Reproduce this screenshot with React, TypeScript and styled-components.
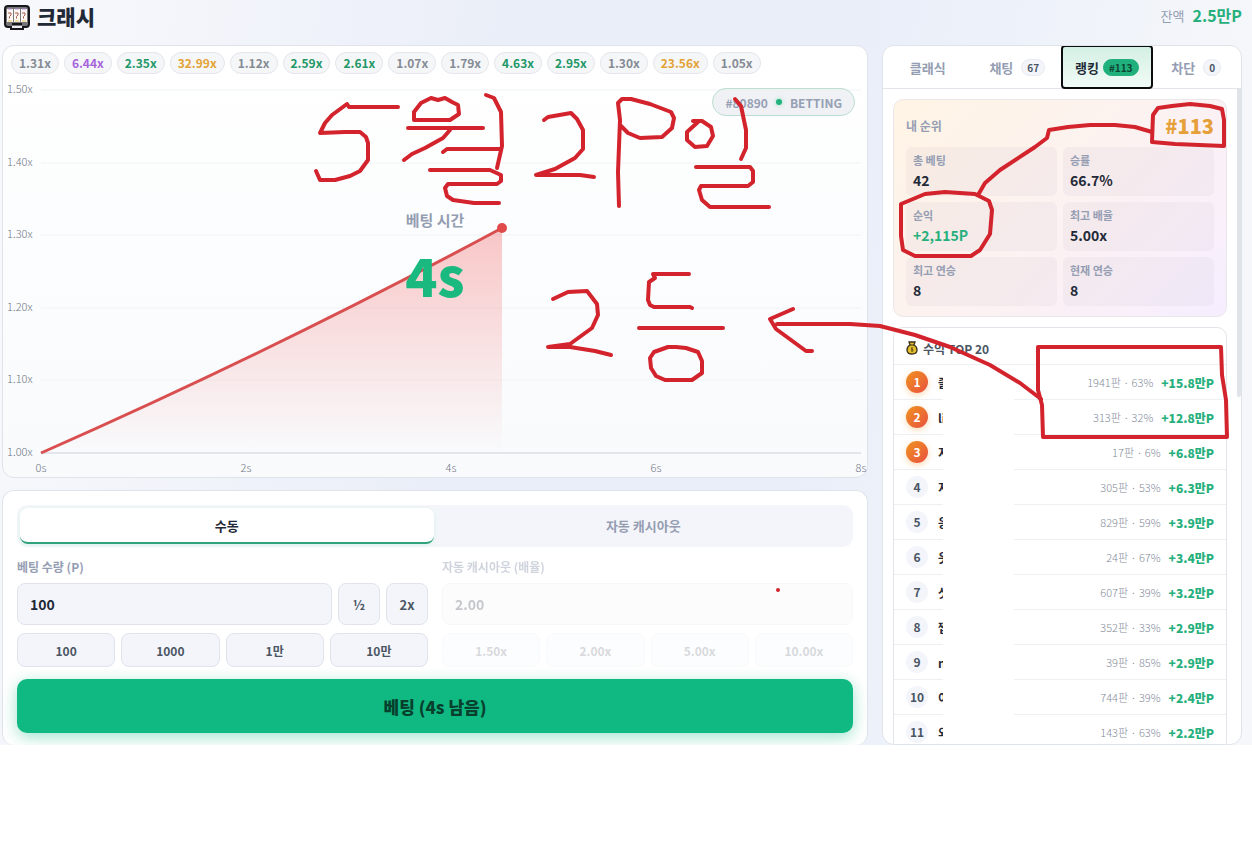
import React, { useState } from "react";
import styled, { createGlobalStyle } from "styled-components";

const Global = createGlobalStyle`
  *, *::before, *::after { box-sizing: border-box; }
  body { margin: 0; background: #fff; }
  body, button, input { font-family: "Noto Sans CJK KR", "Noto Sans", sans-serif; }
  button { margin: 0; padding: 0; border: 0; background: none; color: inherit; cursor: pointer; }
`;

type Tier = "low" | "mid" | "high" | "max";
const tierColor: Record<Tier, string> = { low: "#858b94", mid: "#1f9868", high: "#a765dc", max: "#e3a336" };

const Page = styled.main`
  position: relative;
  overflow: hidden;
  padding: 0 10px 0 2px;
  color: #1f2937;
  background: linear-gradient(100deg, #f8f9fc 0%, #eaeef8 38%, #e9eef9 62%, #f5f7fa 92%);
`;
const TopBar = styled.header`
  display: flex;
  align-items: flex-start;
  justify-content: space-between;
  height: 33px;
  margin-bottom: 12px;
`;
const Title = styled.h1`
  display: flex;
  align-items: flex-start;
  gap: 7px;
  margin: 0;
  padding-left: 2px;
  font-size: 21px;
  line-height: 32px;
  font-weight: 900;
  svg { margin-top: 4px; }
`;
const Balance = styled.div`
  display: flex;
  align-items: center;
  gap: 8px;
  font-size: 13px;
  line-height: 31px;
  color: #949db2;
`;
const BalanceValue = styled.strong`
  font-size: 16px;
  color: #27b07d;
`;
const Columns = styled.div`
  display: grid;
  grid-template-columns: minmax(0, 1fr) 360px;
  gap: 14px;
`;
const LeftColumn = styled.div`
  display: flex;
  flex-direction: column;
  gap: 12px;
`;
const Panel = styled.section`
  border: 1px solid #dfe3ea;
  border-radius: 12px;
  background: #fff;
`;
const ChartPanel = styled(Panel)`
  position: relative;
  background: linear-gradient(180deg, #fff, #f8fafc);
`;
const ChipRow = styled.div`
  display: flex;
  gap: 5px;
  padding: 6px 8px;
`;
const Chip = styled.span<{ $tier: Tier }>`
  padding: 0 7px;
  border: 1px solid #e4e6eb;
  border-radius: 11px;
  background: #f5f6f8;
  font-size: 12px;
  line-height: 20px;
  font-weight: 700;
  color: ${(p) => tierColor[p.$tier]};
`;
const ChartSvg = styled.svg`
  display: block;
  width: 100%;
  height: auto;
  overflow: visible;
  font-family: "Noto Sans CJK KR", sans-serif;
  font-size: 11px;
  font-weight: 300;
`;
const RoundBadge = styled.div`
  position: absolute;
  top: 42px;
  right: 12px;
  display: flex;
  align-items: center;
  gap: 8px;
  height: 28px;
  padding: 0 12px;
  border: 1px solid #bcded0;
  border-radius: 14px;
  background: #eff1f4;
  font-size: 12px;
  font-weight: 700;
  color: #96a0b4;
`;
const LiveDot = styled.i`
  width: 6px;
  height: 6px;
  border-radius: 50%;
  background: #22b07d;
  box-shadow: 0 0 4px #8fdcc0;
`;
const Countdown = styled.div`
  position: absolute;
  top: 163px;
  left: 0;
  right: 0;
  text-align: center;
  pointer-events: none;
`;
const CountdownLabel = styled.div`
  font-size: 15px;
  line-height: 22px;
  font-weight: 700;
  color: #949db2;
`;
const CountdownValue = styled.div`
  margin-top: 12px;
  font-size: 53px;
  line-height: 62px;
  font-weight: 900;
  color: #1ab980;
`;

const BetPanel = styled(Panel)`
  display: flex;
  flex-direction: column;
  gap: 12px;
  padding: 14px 14px 12px;
  border-bottom: 0;
`;
const Segmented = styled.div`
  display: grid;
  grid-template-columns: 1fr 1fr;
  gap: 3px;
  height: 42px;
  padding: 3px;
  border-radius: 10px;
  background: #f4f5fa;
`;
const Segment = styled.button<{ $active: boolean }>`
  border-radius: 8px;
  border-bottom: 2px solid ${(p) => (p.$active ? "#2fa37a" : "transparent")};
  background: ${(p) => (p.$active ? "#fff" : "transparent")};
  box-shadow: ${(p) => (p.$active ? "0 1px 4px #d8f3ea" : "none")};
  font-size: 13px;
  font-weight: 700;
  color: ${(p) => (p.$active ? "#1f2937" : "#949db2")};
`;
const Fields = styled.div`
  display: grid;
  grid-template-columns: 1fr 1fr;
  gap: 14px;
`;
const Field = styled.div<{ $disabled?: boolean }>`
  display: flex;
  flex-direction: column;
  gap: 8px;
  min-width: 0;
  opacity: ${(p) => (p.$disabled ? 0.45 : 1)};
`;
const FieldLabel = styled.label`
  font-size: 12px;
  line-height: 16px;
  font-weight: 700;
  color: #949db2;
`;
const FieldRow = styled.div`
  display: flex;
  gap: 6px;
`;
const TextInput = styled.input`
  flex: 1;
  min-width: 0;
  height: 42px;
  padding: 0 12px;
  border: 1px solid #e1e3ec;
  border-radius: 8px;
  background: #f4f5fb;
  font-size: 14px;
  font-weight: 700;
  color: #1f2937;
  &:disabled { border-color: #eceef2; background: #f9f9fb; color: #7d828b; }
`;
const SmallButton = styled.button`
  width: 42px;
  height: 42px;
  border: 1px solid #e1e3ec;
  border-radius: 8px;
  background: #f4f5fb;
  font-size: 13px;
  font-weight: 700;
  color: #4b5563;
`;
const QuickButton = styled(SmallButton)<{ $faded?: boolean }>`
  flex: 1;
  width: auto;
  height: 34px;
  font-size: 12px;
  opacity: ${(p) => (p.$faded ? 0.5 : 1)};
`;
const BetButton = styled.button`
  height: 54px;
  border-radius: 10px;
  background: #10b981;
  box-shadow: 0 4px 16px rgba(16, 185, 129, 0.4);
  font-size: 17px;
  font-weight: 900;
  color: #08402e;
`;

const SidePanel = styled(Panel)`
  contain: size;
  display: flex;
  flex-direction: column;
  overflow: hidden;
`;
const Tabs = styled.nav`
  display: grid;
  grid-template-columns: repeat(4, 1fr);
  flex: none;
  height: 43px;
  border-bottom: 1px solid #e1e5ea;
`;
const Tab = styled.button<{ $active: boolean }>`
  display: flex;
  align-items: center;
  justify-content: center;
  gap: ${(p) => (p.$active ? 4 : 8)}px;
  border-radius: 3px;
  outline: ${(p) => (p.$active ? "2px solid #0b0d10" : "none")};
  outline-offset: -1px;
  background: ${(p) => (p.$active ? "linear-gradient(180deg, #d3efe2, #f2fcf8)" : "none")};
  font-size: 13px;
  font-weight: 700;
  color: ${(p) => (p.$active ? "#1f2937" : "#949db2")};
`;
const TabCount = styled.span<{ $active: boolean }>`
  padding: 0 5px;
  border: 1px solid ${(p) => (p.$active ? "#1fb07c" : "#e8eaf1")};
  border-radius: 9px;
  background: ${(p) => (p.$active ? "#1fb07c" : "#f4f5fb")};
  font-size: 10px;
  line-height: 15px;
  color: ${(p) => (p.$active ? "#0d4632" : "#4b5563")};
`;
const ScrollArea = styled.div`
  display: flex;
  flex: 1;
  min-height: 0;
`;
const ScrollContent = styled.div`
  flex: 1;
  min-width: 0;
  padding: 10px 10px 0;
`;
const ScrollTrack = styled.div`
  flex: none;
  width: 4px;
`;
const ScrollThumb = styled.div`
  height: 308px;
  border-radius: 0 0 2px 2px;
  background: #e0e4e8;
`;
const RankCard = styled.div`
  padding: 12px 12px 10px;
  border: 1px solid #ebe6e9;
  border-radius: 10px;
  background: linear-gradient(135deg, #fff4e4 0%, #fcf2f1 50%, #f6eeff 100%);
`;
const RankHead = styled.div`
  display: flex;
  align-items: center;
  justify-content: space-between;
  height: 28px;
  margin-bottom: 7px;
  font-size: 12px;
  line-height: 32px;
  font-weight: 700;
  color: #949db2;
`;
const RankNumber = styled.strong`
  font-size: 20px;
  line-height: 28px;
  font-weight: 900;
  color: #e6a03a;
`;
const StatGrid = styled.dl`
  display: grid;
  grid-template-columns: 1fr 1fr;
  gap: 6px;
  margin: 0;
`;
const Stat = styled.div`
  padding: 4px 7px;
  border-radius: 6px;
  background: rgba(150, 145, 165, 0.07);
`;
const StatLabel = styled.dt`
  font-size: 11px;
  line-height: 18px;
  font-weight: 700;
  color: #949db2;
`;
const StatValue = styled.dd<{ $gain?: boolean }>`
  margin: 0;
  font-size: 14px;
  line-height: 23px;
  font-weight: 700;
  color: ${(p) => (p.$gain ? "#27b07d" : "#1f2937")};
`;
const TopCard = styled.div`
  margin-top: 10px;
  border: 1px solid #e1e5ea;
  border-radius: 10px 10px 0 0;
`;
const TopHead = styled.h2`
  display: flex;
  align-items: center;
  gap: 5px;
  height: 37px;
  margin: 0;
  padding: 4px 12px 0;
  border-bottom: 1px solid #edf0f3;
  font-size: 12px;
  font-weight: 700;
  color: #4b5563;
`;
const TopRows = styled.ol`
  position: relative;
  margin: 0;
  padding: 0;
  list-style: none;
`;
const TopRow = styled.li`
  display: flex;
  align-items: center;
  gap: 8px;
  height: 35px;
  padding: 0 12px;
  border-bottom: 1px solid #edf0f3;
`;
const Medal = styled.span<{ $top: boolean }>`
  width: 22px;
  height: 22px;
  margin-right: 2px;
  border-radius: 50%;
  text-align: center;
  font-size: 12px;
  line-height: 22px;
  font-weight: 700;
  color: ${(p) => (p.$top ? "#fff" : "#4b5563")};
  background: ${(p) => (p.$top ? "linear-gradient(135deg, #f0941f, #e9503f)" : "#f4f5fb")};
  box-shadow: ${(p) => (p.$top ? "0 2px 6px rgba(240, 150, 40, 0.35)" : "none")};
`;
const Player = styled.span`
  flex: 1;
  min-width: 0;
  overflow: hidden;
  white-space: nowrap;
  font-size: 12px;
  font-weight: 700;
`;
const Record = styled.span`
  font-size: 11px;
  font-weight: 300;
  color: #848b9a;
`;
const Profit = styled.strong`
  font-size: 12px;
  font-weight: 900;
  color: #27b07d;
`;
const NameMask = styled.li`
  position: absolute;
  top: 1px;
  bottom: 0;
  left: 49px;
  width: 71px;
  background: #fff;
`;
const Ink = styled.svg`
  position: absolute;
  top: 0;
  left: 0;
  pointer-events: none;
  fill: none;
  stroke: #d3242d;
  stroke-width: 4;
  stroke-linecap: round;
  stroke-linejoin: round;
`;

const chips: [string, Tier][] = [
  ["1.31x", "low"], ["6.44x", "high"], ["2.35x", "mid"], ["32.99x", "max"], ["1.12x", "low"],
  ["2.59x", "mid"], ["2.61x", "mid"], ["1.07x", "low"], ["1.79x", "low"], ["4.63x", "mid"],
  ["2.95x", "mid"], ["1.30x", "low"], ["23.56x", "max"], ["1.05x", "low"],
];
const tabs: [string, string?][] = [["클래식"], ["채팅", "67"], ["랭킹", "#113"], ["차단", "0"]];
const stats: [string, string][] = [
  ["총 베팅", "42"], ["승률", "66.7%"], ["순익", "+2,115P"],
  ["최고 배율", "5.00x"], ["최고 연승", "8"], ["현재 연승", "8"],
];
const leaders: [string, string, string][] = [
  ["졸", "1941판 · 63%", "+15.8만P"], ["li", "313판 · 32%", "+12.8만P"], ["지", "17판 · 6%", "+6.8만P"],
  ["지", "305판 · 53%", "+6.3만P"], ["응", "829판 · 59%", "+3.9만P"], ["옷", "24판 · 67%", "+3.4만P"],
  ["삿", "607판 · 39%", "+3.2만P"], ["찝", "352판 · 33%", "+2.9만P"], ["n", "39판 · 85%", "+2.9만P"],
  ["이", "744판 · 39%", "+2.4만P"], ["외", "143판 · 63%", "+2.2만P"],
];
const strokes = [
  "M398 107H349L347 104L332 115L325 123L320 133L345 132L360 132L366 137L368 143V160L360 171L350 176L335 180H320L316 171",
  "M414 120V112L421 103L431 98L438 100L445 98L452 102L458 105L459 114L450 120Z",
  "M408 128H483M450 130L443 138L425 148L412 154L404 160",
  "M486 95L494 98L501 112L502 146L497 168M443 152L447 149H500",
  "M430 170H490L501 175V181L497 184H448L445 188L447 196L453 200L474 203H499",
  "M544 120L548 117L571 113L577 119L583 130V149L575 158L555 169L536 175H580L594 177",
  "M619 206L618 172L620 120L618 103L622 99H631L650 104L671 112L674 118L672 128L662 137L640 138L628 133L620 125",
  "M693 121H702L711 127L713 136L707 146L695 147L687 140V132L698 122",
  "M735 99L741 106L746 130V148L741 159",
  "M696 167H750L753 171V182L748 186H701L699 190L702 200L710 207H769",
  "M553 299L568 292L587 291L597 304L598 315L592 328L570 344L548 347H570L595 351L611 355",
  "M689 274H653L655 278L649 282L648 300L650 305L654 307H690L692 308",
  "M639 328H723M668 347L654 352L650 358L651 368L656 376L665 380H692L702 373V361L698 352L686 348L676 347Z",
  "M793 309L770 319L776 329L806 351H812M777 324H850L880 326L915 335L950 347L990 365L1020 383L1041 399",
  "M1153 115L1158 108L1172 106L1190 104L1210 106L1222 109L1224 120V146L1175 144L1152 142L1153 115",
  "M1152 132L1135 127L1115 125H1090L1068 127L1049 130L1047 138L1035 147L1000 170L985 183L978 195",
  "M901 204L925 194L945 192L975 194L989 201L992 210L990 234L980 250L971 256H915L903 250L901 236Z",
  "M1038 347V390L1042 405L1043 437H1227L1226 400L1222 375L1221 347Z",
];

const SlotIcon = () => (
  <svg width="26" height="26" viewBox="0 0 26 26" aria-hidden="true">
    <rect x="1" y="2" width="24" height="21" rx="3" fill="#77777b" stroke="#18181b" strokeWidth="2" />
    <path d="M6 23h14v3H6z" fill="#18181b" />
    <path d="M8 22h10v2H8z" fill="#eee" />
    <path d="M3 5h6v13H3zM10 5h6v13h-6zM17 5h6v13h-6z" fill="#fff8f2" />
    <path d="M4 5h4M11 5h4M18 5h4" stroke="#b58cd6" />
    <path d="M4 17h4M11 17h4M18 17h4" stroke="#e4c95c" />
    <path d="M4 9h3v2l-1.500 1.500v2M11 9h3v2l-1.500 1.500v2M18 9h3v2l-1.500 1.500v2" fill="none" stroke="#a65b4e" />
    <path d="M8 20h10" stroke="#18181b" strokeWidth="2" />
  </svg>
);

const BagIcon = () => (
  <svg width="12" height="14" viewBox="0 0 12 14" aria-hidden="true">
    <path d="M3 1h6L8 4c2 1 3 3 3 5 0 3-2 4-5 4S1 12 1 9c0-2 1-4 3-5z" fill="#e3bd2c" stroke="#38301c" strokeWidth="1.3" />
    <path d="M4 4h4" stroke="#38301c" />
    <path d="M7 7H5.500v1.500h1.500V10H5M6 6v5" stroke="#665018" strokeWidth=".8" fill="none" />
  </svg>
);

const Chart = () => (
  <ChartSvg viewBox="0 0 864 397" role="img" aria-label="배율 그래프">
    <defs>
      <linearGradient id="fall" x1="0" y1="0" x2="0" y2="1">
        <stop offset="0" stopColor="#ef4444" stopOpacity=".3" />
        <stop offset="1" stopColor="#ef4444" stopOpacity="0" />
      </linearGradient>
    </defs>
    {["1.50x", "1.40x", "1.30x", "1.20x", "1.10x", "1.00x"].map((label, i) => {
      const y = Math.round(10 + i * 72.6);
      return (
        <g key={label}>
          <line x1="38" x2="858" y1={y} y2={y} stroke={i === 5 ? "#e2e5e9" : "#f0f2f5"} strokeWidth={i === 5 ? 2 : 1} />
          <text x="4" y={y + 3} fill="#6f7784">{label}</text>
        </g>
      );
    })}
    {["0s", "2s", "4s", "6s", "8s"].map((label, i) => (
      <text key={label} x={38 + i * 205} y="392" textAnchor="middle" fill="#6f7784">{label}</text>
    ))}
    <path d="M38 373Q278 267 499 148V373Z" fill="url(#fall)" />
    <path d="M38 373Q278 267 499 148" fill="none" stroke="#d94f50" strokeWidth="3" />
    <circle cx="499" cy="148" r="5" fill="#e04a4a" />
  </ChartSvg>
);

export default function App() {
  const [mode, setMode] = useState(0);
  const [tab, setTab] = useState(2);
  const [amount, setAmount] = useState("100");
  return (
    <>
      <Global />
      <Page>
        <TopBar>
          <Title><SlotIcon />크래시</Title>
          <Balance>잔액 <BalanceValue>2.5만P</BalanceValue></Balance>
        </TopBar>
        <Columns>
          <LeftColumn>
            <ChartPanel>
              <ChipRow>{chips.map(([v, t]) => <Chip key={v} $tier={t}>{v}</Chip>)}</ChipRow>
              <Chart />
              <RoundBadge>#80890 <LiveDot /> BETTING</RoundBadge>
              <Countdown>
                <CountdownLabel>베팅 시간</CountdownLabel>
                <CountdownValue>4s</CountdownValue>
              </Countdown>
            </ChartPanel>
            <BetPanel>
              <Segmented>
                {["수동", "자동 캐시아웃"].map((name, i) => (
                  <Segment key={name} $active={mode === i} onClick={() => setMode(i)}>{name}</Segment>
                ))}
              </Segmented>
              <Fields>
                <Field>
                  <FieldLabel htmlFor="amount">베팅 수량 (P)</FieldLabel>
                  <FieldRow>
                    <TextInput id="amount" value={amount} onChange={(e) => setAmount(e.target.value)} />
                    <SmallButton>½</SmallButton>
                    <SmallButton>2x</SmallButton>
                  </FieldRow>
                  <FieldRow>
                    {["100", "1000", "1만", "10만"].map((v) => <QuickButton key={v}>{v}</QuickButton>)}
                  </FieldRow>
                </Field>
                <Field $disabled>
                  <FieldLabel htmlFor="cashout">자동 캐시아웃 (배율)</FieldLabel>
                  <FieldRow><TextInput id="cashout" defaultValue="2.00" disabled /></FieldRow>
                  <FieldRow>
                    {["1.50x", "2.00x", "5.00x", "10.00x"].map((v) => <QuickButton key={v} $faded disabled>{v}</QuickButton>)}
                  </FieldRow>
                </Field>
              </Fields>
              <BetButton>베팅 (4s 남음)</BetButton>
            </BetPanel>
          </LeftColumn>
          <SidePanel>
            <Tabs>
              {tabs.map(([name, count], i) => (
                <Tab key={name} $active={tab === i} onClick={() => setTab(i)}>
                  {name}
                  {count && <TabCount $active={tab === i}>{count}</TabCount>}
                </Tab>
              ))}
            </Tabs>
            <ScrollArea>
              <ScrollContent>
                <RankCard>
                  <RankHead>내 순위 <RankNumber>#113</RankNumber></RankHead>
                  <StatGrid>
                    {stats.map(([label, value]) => (
                      <Stat key={label}>
                        <StatLabel>{label}</StatLabel>
                        <StatValue $gain={value.startsWith("+")}>{value}</StatValue>
                      </Stat>
                    ))}
                  </StatGrid>
                </RankCard>
                <TopCard>
                  <TopHead><BagIcon />수익 TOP 20</TopHead>
                  <TopRows>
                    {leaders.map(([name, record, profit], i) => (
                      <TopRow key={i}>
                        <Medal $top={i < 3}>{i + 1}</Medal>
                        <Player>{name}</Player>
                        <Record>{record}</Record>
                        <Profit>{profit}</Profit>
                      </TopRow>
                    ))}
                    <NameMask aria-hidden="true" />
                  </TopRows>
                </TopCard>
              </ScrollContent>
              <ScrollTrack><ScrollThumb /></ScrollTrack>
            </ScrollArea>
          </SidePanel>
        </Columns>
        <Ink width="1252" height="745" viewBox="0 0 1252 745" aria-hidden="true">
          {strokes.map((d) => <path key={d} d={d} />)}
          <circle cx="778" cy="590" r="1" strokeWidth="2" />
        </Ink>
      </Page>
    </>
  );
}
